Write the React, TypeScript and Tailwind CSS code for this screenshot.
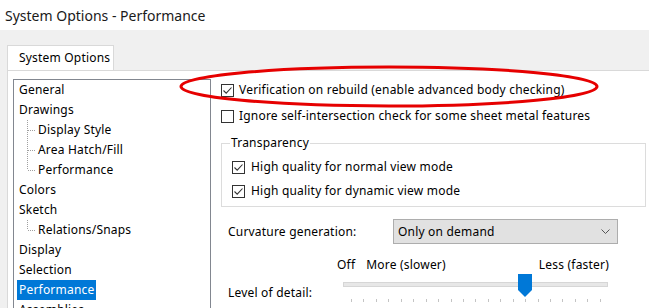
import React from "react";

const font = { fontFamily: '"Noto Sans", "Open Sans", sans-serif' };

function Check({ checked }: { checked?: boolean }) {
  return (
    <span className="w-[13px] h-[13px] border border-[#333333] bg-white flex items-center justify-center shrink-0">
      {checked && (
        <svg width="11" height="11" viewBox="0 0 11 11">
          <path d="M1.5 5.5 L4.2 8.2 L9.5 2.5" fill="none" stroke="#333333" strokeWidth="1.1" />
        </svg>
      )}
    </span>
  );
}

function TreeItem({ label, selected }: { label: string; selected?: boolean }) {
  return (
    <div className="h-[20px] flex items-center pl-[3px]">
      <span
        className={
          "h-[20px] leading-[20px] px-[2px] " +
          (selected ? "bg-[#0078d7] text-white" : "text-black")
        }
      >
        {label}
      </span>
    </div>
  );
}

function TreeChild({ label, last }: { label: string; last?: boolean }) {
  return (
    <div className="h-[20px] flex items-center pl-[13px]">
      <svg width="9" height="20" viewBox="0 0 9 20" className="shrink-0">
        <line
          x1="0.5"
          y1="0"
          x2="0.5"
          y2={last ? 10 : 20}
          stroke="#a0a0a0"
          strokeDasharray="1 1"
        />
        <line x1="1" y1="10.5" x2="9" y2="10.5" stroke="#a0a0a0" strokeDasharray="1 1" />
      </svg>
      <span className="px-[2px] leading-[20px]">{label}</span>
    </div>
  );
}

export default function App() {
  const ticks = Array.from({ length: 21 });
  return (
    <div
      className="w-[649px] h-[308px] overflow-hidden bg-[#f0f0f0] relative text-[12px] tracking-[0.2px] text-black"
      style={font}
    >
      <div className="h-[30px] bg-white flex items-center pl-[5px] text-[14px] tracking-normal text-[#1a1a1a]">
        System Options - Performance
      </div>
      <div className="pl-[7px] pt-[15px]">
        <div className="w-[107px] h-[25px] bg-white border border-b-0 border-[#d9d9d9] flex items-center pl-[11px] relative z-10">
          System Options
        </div>
        <div className="bg-white border-t border-l border-[#d9d9d9] h-[300px] flex pl-[5px] pt-[8px]">
          <div className="w-[198px] h-[240px] border border-[#828790] shrink-0">
            <TreeItem label="General" />
            <TreeItem label="Drawings" />
            <TreeChild label="Display Style" />
            <TreeChild label="Area Hatch/Fill" />
            <TreeChild label="Performance" last />
            <TreeItem label="Colors" />
            <TreeItem label="Sketch" />
            <TreeChild label="Relations/Snaps" last />
            <TreeItem label="Display" />
            <TreeItem label="Selection" />
            <TreeItem label="Performance" selected />
            <TreeItem label="Assemblies" />
          </div>
          <div className="flex flex-col pl-[10px] grow">
            <div className="h-[20px] mt-[1px] flex items-center gap-[5px]">
              <Check checked />
              <span>Verification on rebuild (enable advanced body checking)</span>
            </div>
            <div className="h-[20px] mt-[6px] flex items-center gap-[5px]">
              <Check />
              <span>Ignore self-intersection check for some sheet metal features</span>
            </div>
            <fieldset className="mt-[9px] w-[425px] border border-[#dcdcdc] pb-[5px]">
              <legend className="ml-[8px] px-[1px] leading-[16px]">Transparency</legend>
              <div className="h-[20px] mt-[6px] ml-[10px] flex items-center gap-[6px]">
                <Check checked />
                <span>High quality for normal view mode</span>
              </div>
              <div className="h-[20px] mt-[4px] ml-[10px] flex items-center gap-[6px]">
                <Check checked />
                <span>High quality for dynamic view mode</span>
              </div>
            </fieldset>
            <div className="mt-[12px] flex items-center pl-[7px]">
              <span className="w-[165px]">Curvature generation:</span>
              <div className="w-[225px] h-[25px] bg-[#e1e1e1] border border-[#adadad] flex items-center justify-between pl-[4px] pr-[7px]">
                <span>Only on demand</span>
                <svg width="9" height="5" viewBox="0 0 9 5">
                  <path d="M0.5 0.5 L4.5 4.5 L8.5 0.5" fill="none" stroke="#555" strokeWidth="1" />
                </svg>
              </div>
            </div>
            <div className="mt-[13px] h-[16px] flex items-center pl-[116px] w-[388px]">
              <span>Off</span>
              <span className="ml-[11px]">More (slower)</span>
              <span className="ml-auto">Less (faster)</span>
            </div>
            <div className="flex pl-[7px] mt-[1px]">
              <span className="w-[115px] pt-[11px] leading-[16px]">Level of detail:</span>
              <div className="relative w-[265px] h-[30px]">
                <div className="absolute left-0 right-0 top-[8px] h-[5px] bg-[#e7e7e7] border border-[#d6d6d6]" />
                <svg
                  className="absolute left-[175px] top-0"
                  width="14"
                  height="23"
                  viewBox="0 0 14 23"
                >
                  <path d="M0 0 H14 V16 L7 23 L0 16 Z" fill="#0078d7" />
                </svg>
                <div className="absolute left-[8px] w-[250px] top-[25px] flex justify-between">
                  {ticks.map((_, i) => (
                    <span key={i} className="w-[1px] h-[3px] bg-[#c4c4c4]" />
                  ))}
                </div>
              </div>
            </div>
          </div>
        </div>
      </div>
      <svg
        className="absolute left-0 top-0 pointer-events-none"
        width="649"
        height="308"
        viewBox="0 0 649 308"
      >
        <ellipse cx="389" cy="86.5" rx="208" ry="19.5" fill="none" stroke="#e60000" strokeWidth="3" />
      </svg>
    </div>
  );
}
